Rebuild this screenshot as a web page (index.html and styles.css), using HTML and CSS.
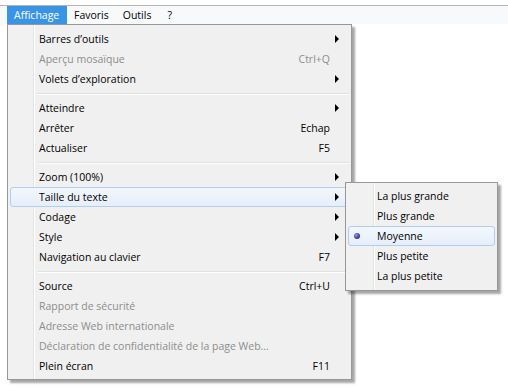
FILE: index.html
```html
<!DOCTYPE html>
<html>
<head>
<meta charset="utf-8">
<link rel="stylesheet" href="styles.css">
</head>
<body>
<div class="menubar">
  <span class="mb-item active">Affichage</span>
  <span class="mb-item">Favoris</span>
  <span class="mb-item">Outils</span>
  <span class="mb-item q">?</span>
</div>

<div class="menu main">
  <div class="item"><span class="label">Barres d’outils</span><span class="arrow-cell"><span class="arrow"></span></span></div>
  <div class="item disabled"><span class="label">Aperçu mosaïque</span><span class="key">Ctrl+Q</span><span class="arrow-cell"></span></div>
  <div class="item"><span class="label">Volets d’exploration</span><span class="arrow-cell"><span class="arrow"></span></span></div>
  <div class="sep"></div>
  <div class="item"><span class="label">Atteindre</span><span class="arrow-cell"><span class="arrow"></span></span></div>
  <div class="item"><span class="label">Arrêter</span><span class="key">Echap</span><span class="arrow-cell"></span></div>
  <div class="item"><span class="label">Actualiser</span><span class="key">F5</span><span class="arrow-cell"></span></div>
  <div class="sep"></div>
  <div class="item"><span class="label">Zoom (100%)</span><span class="arrow-cell"><span class="arrow"></span></span></div>
  <div class="item hot"><span class="label">Taille du texte</span><span class="arrow-cell"><span class="arrow"></span></span></div>
  <div class="item"><span class="label">Codage</span><span class="arrow-cell"><span class="arrow"></span></span></div>
  <div class="item"><span class="label">Style</span><span class="arrow-cell"><span class="arrow"></span></span></div>
  <div class="item"><span class="label">Navigation au clavier</span><span class="key">F7</span><span class="arrow-cell"></span></div>
  <div class="sep"></div>
  <div class="item"><span class="label">Source</span><span class="key">Ctrl+U</span><span class="arrow-cell"></span></div>
  <div class="item disabled"><span class="label">Rapport de sécurité</span><span class="arrow-cell"></span></div>
  <div class="item disabled"><span class="label">Adresse Web internationale</span><span class="arrow-cell"></span></div>
  <div class="item disabled"><span class="label">Déclaration de confidentialité de la page Web...</span><span class="arrow-cell"></span></div>
  <div class="item"><span class="label">Plein écran</span><span class="key">F11</span><span class="arrow-cell"></span></div>
</div>

<div class="menu sub">
  <div class="item"><span class="label">La plus grande</span></div>
  <div class="item"><span class="label">Plus grande</span></div>
  <div class="item hot"><span class="bullet"></span><span class="label">Moyenne</span></div>
  <div class="item"><span class="label">Plus petite</span></div>
  <div class="item"><span class="label">La plus petite</span></div>
</div>
</body>
</html>
```

FILE: styles.css
```css
html, body {
  margin: 0;
  padding: 0;
  background: #ffffff;
}
body {
  font-family: "Open Sans", "Noto Sans", "DejaVu Sans", sans-serif;
  font-size: 10.5px;
  color: #000;
  padding-top: 5px;
  position: relative;
  width: 508px;
  height: 383px;
  overflow: hidden;
}
.menubar {
  height: 18px;
  border-top: 1px solid #b4b4b4;
  background: #f8f9fa;
  display: flex;
  align-items: stretch;
  padding-left: 7px;
}
.mb-item {
  display: flex;
  align-items: center;
  padding: 0 7px;
}
.mb-item.q {
  padding-left: 9px;
}
.mb-item.active {
  background: #3a94e6;
  color: #fff;
  width: 46px;
}
.menu {
  position: absolute;
  box-sizing: border-box;
  border: 1px solid #979797;
  box-shadow: 3px 3px 2px rgba(0, 0, 0, 0.35);
  background: #f0f0f0;
}
.menu.main {
  left: 7px;
  top: 24px;
  width: 345px;
  padding: 4px 2px 3px 2px;
  background: linear-gradient(to right, #f1f1f1 0, #f1f1f1 25px, #e2e3e3 25px, #e2e3e3 26px, #ffffff 26px, #ffffff 27px, #f0f0f0 27px);
}
.menu.sub {
  left: 345px;
  top: 182px;
  width: 153px;
  padding: 3px 2px 4px 2px;
  background: linear-gradient(to right, #f1f1f1 0, #f1f1f1 27px, #e2e3e3 27px, #e2e3e3 28px, #ffffff 28px, #ffffff 29px, #f0f0f0 29px);
}
.item {
  height: 20px;
  box-sizing: border-box;
  display: flex;
  align-items: center;
  padding-left: 28px;
  border: 1px solid transparent;
  border-radius: 3px;
}
.label {
  flex: 1;
  white-space: nowrap;
}
.key {
  white-space: nowrap;
}
.arrow-cell {
  width: 18px;
  height: 18px;
  display: flex;
  align-items: center;
  padding-left: 5px;
  box-sizing: border-box;
}
.arrow {
  width: 0;
  height: 0;
  border-top: 4px solid transparent;
  border-bottom: 4px solid transparent;
  border-left: 4px solid #000;
}
.disabled {
  color: #8d8d8d;
}
.item.hot {
  border-color: #b3cdec;
  background: linear-gradient(to bottom, #f3f7fc, #e5eef9);
}
.sub .item.hot {
  padding-left: 0;
}
.bullet {
  width: 6px;
  height: 6px;
  border-radius: 50%;
  margin: 0 17px 0 5px;
  background: radial-gradient(circle at 35% 35%, #9b9be0, #3c3c9c 60%, #2a2a80);
}
.sep {
  height: 0;
  margin: 4px 0 3px 28px;
  border-top: 1px solid #e0e0e0;
  border-bottom: 1px solid #ffffff;
}
```
